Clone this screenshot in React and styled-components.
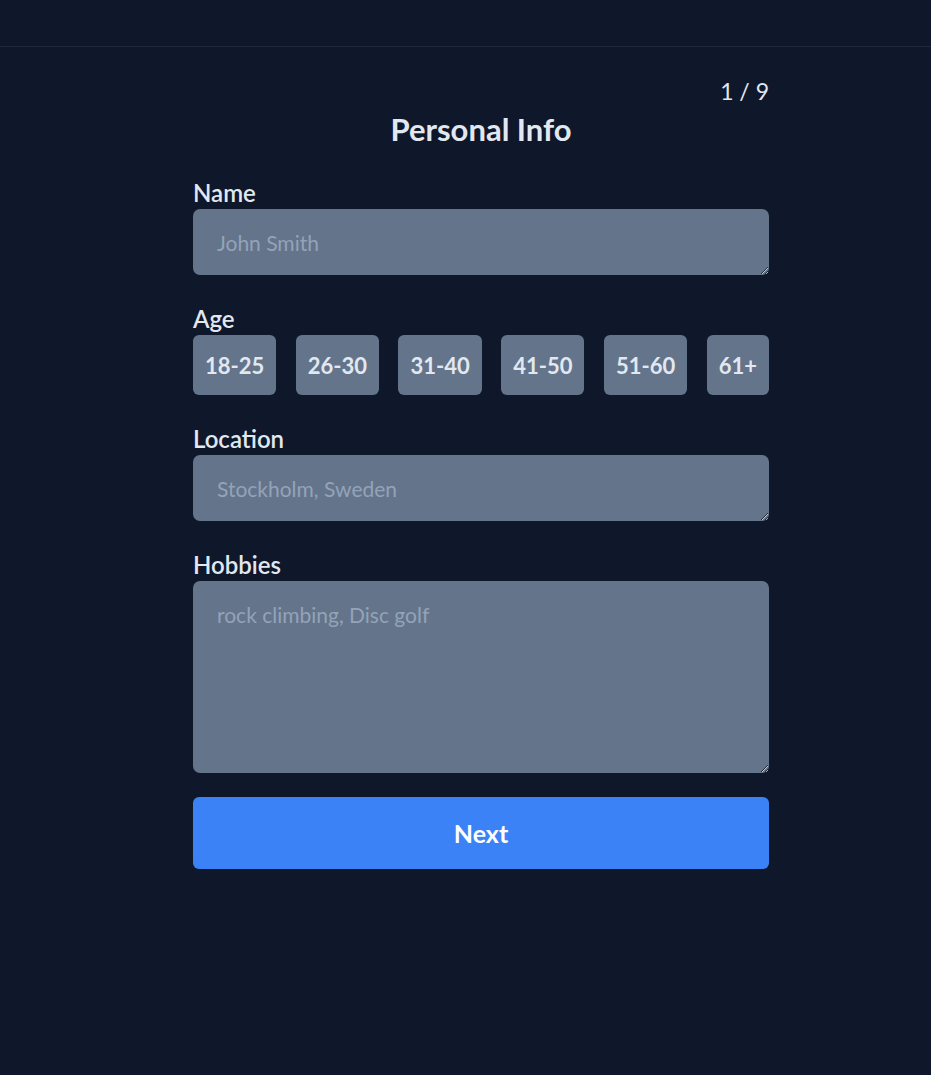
import React, { useState } from "react";
import styled, { createGlobalStyle } from "styled-components";

const GlobalStyle = createGlobalStyle`
  html, body {
    margin: 0;
    padding: 0;
    background: #0f172a;
  }
  body {
    font-family: "Lato", "Noto Sans", "Liberation Sans", sans-serif;
    color: #e2e8f0;
  }
  * {
    box-sizing: border-box;
  }
`;

const ages = ["18-25", "26-30", "31-40", "41-50", "51-60", "61+"];

const App = () => {
  const [age, setAge] = useState(null);

  return (
    <>
      <GlobalStyle />
      <Page>
        <Header />
        <Main>
          <Form onSubmit={(e) => e.preventDefault()}>
            <Step>1 / 9</Step>
            <Title>Personal Info</Title>

            <Field>
              <Label htmlFor="name">Name</Label>
              <TextBox id="name" placeholder="John Smith" $height={66} />
            </Field>

            <Field>
              <Label as="div">Age</Label>
              <AgeRow>
                {ages.map((a) => (
                  <AgeButton
                    key={a}
                    type="button"
                    $active={age === a}
                    onClick={() => setAge(a)}
                  >
                    {a}
                  </AgeButton>
                ))}
              </AgeRow>
            </Field>

            <Field>
              <Label htmlFor="location">Location</Label>
              <TextBox
                id="location"
                placeholder="Stockholm, Sweden"
                $height={66}
              />
            </Field>

            <Field $last>
              <Label htmlFor="hobbies">Hobbies</Label>
              <TextBox
                id="hobbies"
                placeholder="rock climbing, Disc golf"
                $height={192}
              />
            </Field>

            <NextButton type="submit">Next</NextButton>
          </Form>
        </Main>
      </Page>
    </>
  );
};

const Page = styled.div`
  min-height: 1075px;
  background: #0f172a;
`;

const Header = styled.header`
  height: 47px;
  border-bottom: 1px solid #1e293b;
`;

const Main = styled.main`
  display: flex;
  justify-content: center;
  padding: 30px 0 0 31px;
`;

const Form = styled.form`
  width: 576px;
  display: flex;
  flex-direction: column;
`;

const Step = styled.div`
  text-align: right;
  font-size: 23px;
  line-height: 28px;
  color: #e2e8f0;
`;

const Title = styled.h1`
  margin: 8px 0 36px;
  text-align: center;
  font-size: 31px;
  line-height: 32px;
  font-weight: 700;
  color: #e2e8f0;
`;

const Field = styled.div`
  display: flex;
  flex-direction: column;
  margin-bottom: ${(p) => (p.$last ? "24px" : "32px")};
`;

const Label = styled.label`
  font-size: 24px;
  line-height: 24px;
  padding-bottom: 4px;
  font-weight: 600;
  color: #e2e8f0;
`;

const TextBox = styled.textarea`
  display: block;
  width: 100%;
  height: ${(p) => p.$height}px;
  padding: 21px 24px 19px;
  border: none;
  border-radius: 7px;
  background: #64748b;
  color: #e2e8f0;
  font-family: inherit;
  font-size: 21px;
  line-height: 26px;
  outline: none;

  &::placeholder {
    color: #94a3b8;
  }
`;

const AgeRow = styled.div`
  display: flex;
  justify-content: space-between;
`;

const AgeButton = styled.button`
  height: 60px;
  padding: 0 12px;
  border: none;
  border-radius: 6px;
  background: ${(p) => (p.$active ? "#3b82f6" : "#64748b")};
  color: #e2e8f0;
  font-family: inherit;
  font-size: 22px;
  font-weight: 700;
  cursor: pointer;
`;

const NextButton = styled.button`
  height: 72px;
  border: none;
  border-radius: 6px;
  background: #3b82f6;
  color: #ffffff;
  font-family: inherit;
  font-size: 25px;
  font-weight: 700;
  cursor: pointer;
`;

export default App;
